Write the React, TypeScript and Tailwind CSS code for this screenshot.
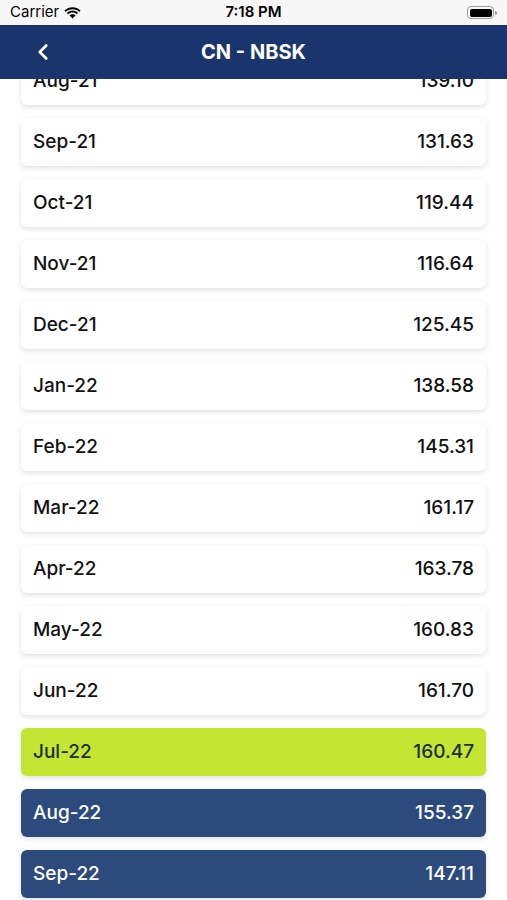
import { ChevronLeft } from 'lucide-react'

type Row = { label: string; value: string; tone?: 'current' | 'future' }

const rows: Row[] = [
  { label: 'Aug-21', value: '139.10' },
  { label: 'Sep-21', value: '131.63' },
  { label: 'Oct-21', value: '119.44' },
  { label: 'Nov-21', value: '116.64' },
  { label: 'Dec-21', value: '125.45' },
  { label: 'Jan-22', value: '138.58' },
  { label: 'Feb-22', value: '145.31' },
  { label: 'Mar-22', value: '161.17' },
  { label: 'Apr-22', value: '163.78' },
  { label: 'May-22', value: '160.83' },
  { label: 'Jun-22', value: '161.70' },
  { label: 'Jul-22', value: '160.47', tone: 'current' },
  { label: 'Aug-22', value: '155.37', tone: 'future' },
  { label: 'Sep-22', value: '147.11', tone: 'future' },
]

function StatusBar() {
  return (
    <div className="h-[25px] bg-[#f7f7f7] flex items-center justify-between px-[10px] text-[15px] text-black">
      <div className="flex items-center gap-[5px] w-[120px]">
        <span>Carrier</span>
        <svg width="17" height="12" viewBox="0 0 17 12">
          <path d="M8.5 2.2c2.6 0 5 1 6.8 2.7l1.3-1.4C14.4 1.4 11.6.2 8.5.2S2.6 1.4.4 3.5l1.3 1.4C3.5 3.2 5.9 2.2 8.5 2.2z" fill="#000" />
          <path d="M8.5 5.6c1.6 0 3.1.6 4.3 1.7l1.3-1.4C12.6 4.5 10.6 3.6 8.5 3.6S4.4 4.5 2.9 5.9l1.3 1.4c1.2-1.1 2.7-1.7 4.3-1.7z" fill="#000" />
          <path d="M8.5 8.9c.7 0 1.3.3 1.8.7l-1.8 1.9-1.8-1.9c.5-.4 1.1-.7 1.8-.7z M5.4 8.5l1.3 1.3c.5-.4 1.1-.7 1.8-.7s1.3.3 1.8.7l1.3-1.3c-.8-.8-1.9-1.3-3.1-1.3s-2.3.5-3.1 1.3z" fill="#000" />
        </svg>
      </div>
      <span className="font-semibold">7:18 PM</span>
      <div className="w-[120px] flex justify-end">
        <div className="flex items-center">
          <div className="w-[27px] h-[13px] rounded-[4px] border border-[#999] p-[1.5px]">
            <div className="w-full h-full rounded-[2px] bg-black" />
          </div>
          <div className="w-[2px] h-[4px] bg-[#999] rounded-r-sm ml-[1px]" />
        </div>
      </div>
    </div>
  )
}

function NavBar() {
  return (
    <div className="h-[54px] bg-[#1a346e] flex items-center relative z-10">
      <div className="w-[70px] pl-[30px] flex items-center">
        <ChevronLeft size={26} strokeWidth={2.4} className="text-white" />
      </div>
      <h1 className="flex-1 text-center text-white text-[20px] font-bold pr-[70px]">
        CN - NBSK
      </h1>
    </div>
  )
}

function PriceRow({ row }: { row: Row }) {
  const tone =
    row.tone === 'current'
      ? 'bg-[#c4e632] text-[#1e2d42]'
      : row.tone === 'future'
        ? 'bg-[#2d4a7c] text-white'
        : 'bg-white text-[#111]'
  return (
    <div
      className={`h-[48px] shrink-0 rounded-[6px] px-[12px] flex items-center justify-between text-[19px] font-medium shadow-[0_2px_5px_rgba(0,0,0,0.12)] ${tone}`}
    >
      <span>{row.label}</span>
      <span>{row.value}</span>
    </div>
  )
}

export default function App() {
  return (
    <div
      className="w-[507px] h-[900px] overflow-hidden bg-white flex flex-col"
      style={{ fontFamily: 'Inter, "Noto Sans", sans-serif' }}
    >
      <StatusBar />
      <NavBar />
      <div className="flex-1 overflow-hidden">
        <div className="-mt-[22px] px-[21px] flex flex-col gap-[13px]">
          {rows.map((r) => (
            <PriceRow key={r.label} row={r} />
          ))}
        </div>
      </div>
    </div>
  )
}
